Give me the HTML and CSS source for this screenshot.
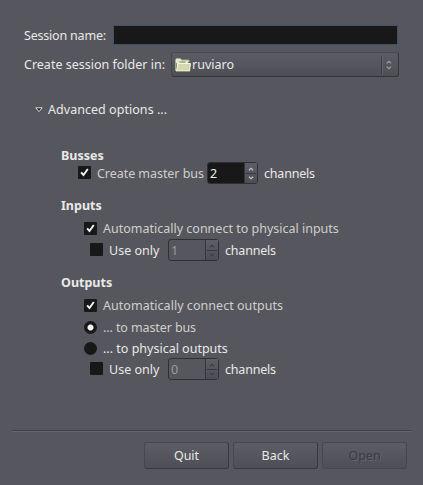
FILE: index.html
```html
<!DOCTYPE html>
<html lang="en">
<head>
<meta charset="utf-8">
<title>Session Setup</title>
<link rel="stylesheet" href="styles.css">
</head>
<body>
<svg width="0" height="0" class="defs">
  <symbol id="tick" viewBox="0 0 13 13"><path d="M3.1 6.3 5.5 9 9.8 3" fill="none" stroke="#f4f4f4" stroke-width="1.9"/></symbol>
  <symbol id="steps" viewBox="0 0 13 21"><path d="M4.2 7 6.5 4.8 8.8 7M4.2 14 6.5 16.2 8.8 14" fill="none" stroke="currentColor" stroke-width="1.2"/><path d="M1 10.5h11" stroke="#35353a"/></symbol>
</svg>
<main class="dialog">
  <div class="row session"><label class="t-session">Session name:</label><div class="entry"></div></div>
  <div class="row folder"><label class="t-folder">Create session folder in:</label>
    <div class="combo">
      <svg class="folder-icon" width="16" height="14" viewBox="0 0 16 14"><path d="M.5 13V1.5L1.5.5h4l1 1.5h7.5v2" fill="#e6e9cf" stroke="#a4aa82"/><path d="M1.5 12.5V5" stroke="#8b926b"/><path d="M4.5 4h6" stroke="#7c825f"/><path d="M3.2 5.5h12.3l-1 7.5H1.5z" fill="#d3d8b0" stroke="#f4f5df"/><path d="M1 13.5h13.5" stroke="#8b926b"/></svg>
      <span class="t-name">ruviaro</span>
      <svg class="combo-arrow" width="17" height="18" viewBox="0 0 17 18"><path d="M5 7.2 7.3 5l2.3 2.2M5 10.8 7.3 13l2.3-2.2" fill="none" stroke="#a3a39f" stroke-width="1.2"/></svg>
    </div>
  </div>
  <div class="row advanced"><svg width="8" height="6" viewBox="0 0 8 6"><path d="M.8.8h6.4L4 4.6z" fill="#222" stroke="#deded9"/></svg><span class="t-advanced">Advanced options ...</span></div>

  <section class="options">
    <h2 class="t-busses">Busses</h2>
    <div class="row busrow"><span class="check"><svg width="13" height="13"><use href="#tick"/></svg></span><span class="t-master dim">Create master bus</span>
      <div class="spin"><span class="value">2</span><span class="stepper"><svg width="13" height="21"><use href="#steps"/></svg></span></div><span class="t-channels">channels</span></div>
    <h2 class="t-inputs">Inputs</h2>
    <div class="row item first"><span class="check"><svg width="13" height="13"><use href="#tick"/></svg></span><span class="t-autoin dim">Automatically connect to physical inputs</span></div>
    <div class="row nested"><span class="check"></span><span class="t-only">Use only</span>
      <div class="spin off"><span class="value">1</span><span class="stepper"><svg width="13" height="21"><use href="#steps"/></svg></span></div><span class="t-channels">channels</span></div>
    <h2 class="t-outputs">Outputs</h2>
    <div class="row item first wide"><span class="check"><svg width="13" height="13"><use href="#tick"/></svg></span><span class="t-autoout dim">Automatically connect outputs</span></div>
    <div class="row item"><span class="radio on"></span><span class="t-tomaster dim">... to master bus</span></div>
    <div class="row item last"><span class="radio"></span><span class="t-tophys">... to physical outputs</span></div>
    <div class="row nested"><span class="check"></span><span class="t-only">Use only</span>
      <div class="spin off"><span class="value">0</span><span class="stepper"><svg width="13" height="21"><use href="#steps"/></svg></span></div><span class="t-channels">channels</span></div>
  </section>

  <footer class="actions"><button>Quit</button><button>Back</button><button disabled>Open</button></footer>
</main>
</body>
</html>
```
FILE: styles.css
```css
* { box-sizing: border-box; }
body { margin: 0; background: #56565e; color: #e9e9e6; font: 12.5px/20px "Noto Sans", sans-serif; }
.defs { position: absolute; }
.dialog { width: 423px; height: 485px; display: flex; flex-direction: column; overflow: hidden; }
.row { display: flex; align-items: center; flex: none; white-space: nowrap; height: 22px; }
label, .row > span { flex: none; }
.dim { color: #cfcfca; }
.session { margin: 24px 25px 0 24px; }
.t-session { width: 89px; padding-top: 1px; letter-spacing: -.2px; }
.entry { flex: 1; height: 20px; background: #181818; border: 1px solid #3e5268; }
.folder { margin: 6px 24px 0 24px; height: 25px; }
.t-folder { width: 147px; }
.combo { flex: 1; height: 25px; display: flex; align-items: center; padding-left: 3px; border: 1px solid #35353a; border-top-color: #4a4a51; border-left-color: #45454c; border-radius: 3px; background: linear-gradient(#5b5d66, #4e4e56); }
.t-name { margin-left: 1px; }
.combo-arrow { margin-left: auto; border-left: 1px solid #3b3b41; box-shadow: inset 1px 0 #63636b; }
.advanced { margin: 22px 0 0 35px; }
.t-advanced { margin-left: 5px; letter-spacing: .04px; }
.options { margin: 25px 0 0 61px; flex: none; }
h2 { margin: 0; font-size: 12.5px; line-height: 20px; height: 20px; font-weight: 700; }
.busrow { margin: -4px 0 12px 17px; }
.busrow .t-master { margin-left: 6px; width: 110px; letter-spacing: -.05px; }
.item { margin-left: 23px; height: 21px; align-items: flex-start; }
.item > span + span { margin: 1px 0 0 6px; }
.item .check, .item .radio { margin-top: 4px; }
.first { margin-top: 2px; }
.wide { height: 22px; }
.last { height: 20px; }
.nested { margin: 0 0 12px 29px; }
.nested .t-only { margin-left: 6px; width: 59px; }
.busrow .t-master, .t-only, .t-channels { padding-top: 2px; }
.busrow .check, .nested .check { margin-bottom: 1px; }
.t-autoout { letter-spacing: .04px; }
.t-tomaster { letter-spacing: -.1px; }
.t-channels { letter-spacing: -.2px; }
.check { width: 13px; height: 13px; background: #181818; display: flex; border-radius: 1px; }
.radio { width: 13px; height: 13px; border-radius: 50%; background: #181818; }
.radio.on { background: radial-gradient(circle, #f5f5f5 0 2.4px, #181818 3.6px); }
.spin { width: 51px; height: 22px; flex: none; display: flex; border: 1px solid #303034; border-radius: 3px; background: #181818; margin-right: 6px; }
.value { width: 36px; padding: 1px 0 0 2px; color: #f0f0ee; }
.stepper { width: 13px; height: 20px; background: linear-gradient(#5d5f68, #4d4d55); border-left: 1px solid #35353a; color: #c7c7c4; display: flex; }
.off { background: #56565e; }
.off .value { color: #9c9c9b; }
.off .stepper { color: #3e3e44; }
.actions { flex: none; display: flex; gap: 4px; justify-content: flex-end; margin: auto 12px 16px; padding: 11px 4px 0 0; border-top: 1px solid #404046; box-shadow: inset 0 1px #65656d; }
button { width: 85px; height: 27px; padding: 0; border: 1px solid #38383e; border-top-color: #47474e; border-left-color: #47474e; border-radius: 3px; background: linear-gradient(#5b5d66, #4e4e56); color: #e9e9e6; font: inherit; }
button:disabled { color: #3c3c42; border-color: #46464d; text-shadow: 1px 1px #64646b; }
```
